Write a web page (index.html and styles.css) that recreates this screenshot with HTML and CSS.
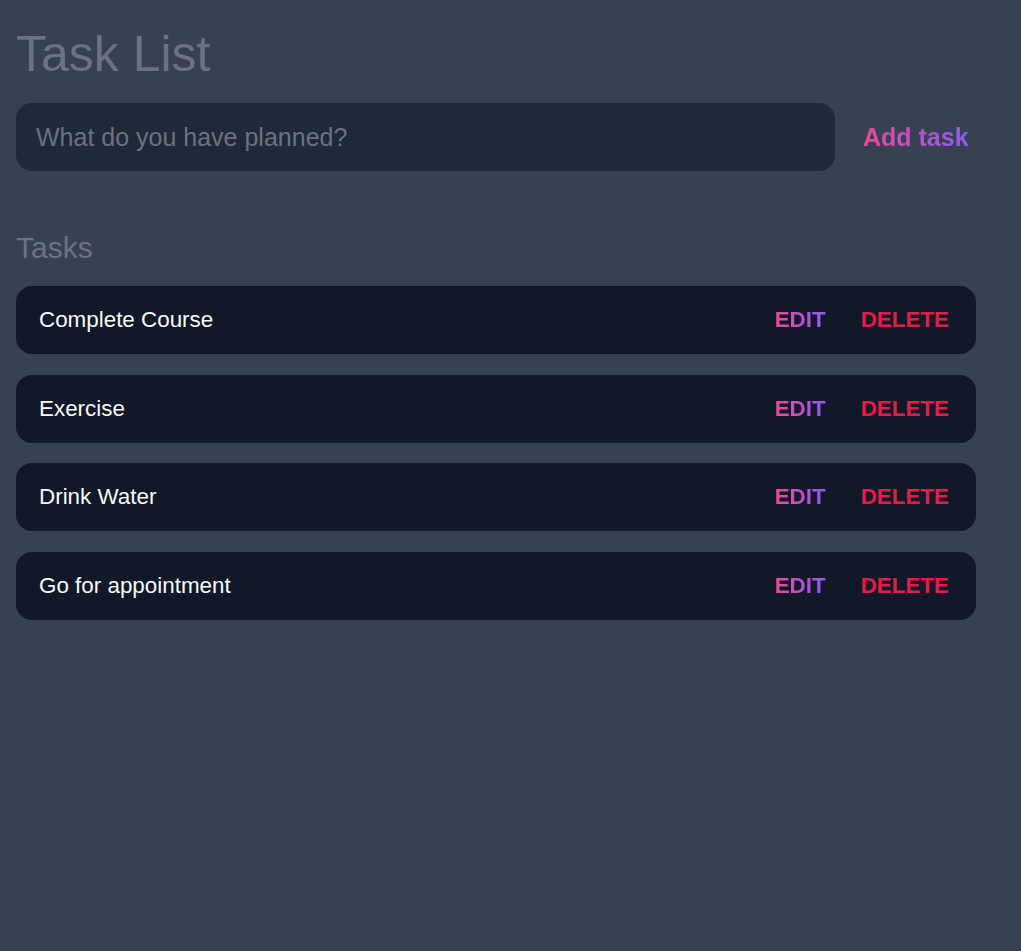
FILE: index.html
```html
<!DOCTYPE html>
<html>
<head>
<meta charset="utf-8">
<link rel="stylesheet" href="styles.css">
</head>
<body>
<main class="app">
  <h1 class="title">Task List</h1>
  <form class="new-task" onsubmit="return false">
    <input class="new-task-input" type="text" placeholder="What do you have planned?">
    <button class="add-btn" type="submit"><span class="grad">Add task</span></button>
  </form>
  <section class="tasks">
    <h2 class="tasks-heading">Tasks</h2>
    <div class="task-list">
      <div class="task"><span class="task-text">Complete Course</span><div class="actions"><button class="edit"><span class="grad">EDIT</span></button><button class="delete">DELETE</button></div></div>
      <div class="task"><span class="task-text">Exercise</span><div class="actions"><button class="edit"><span class="grad">EDIT</span></button><button class="delete">DELETE</button></div></div>
      <div class="task"><span class="task-text">Drink Water</span><div class="actions"><button class="edit"><span class="grad">EDIT</span></button><button class="delete">DELETE</button></div></div>
      <div class="task"><span class="task-text">Go for appointment</span><div class="actions"><button class="edit"><span class="grad">EDIT</span></button><button class="delete">DELETE</button></div></div>
    </div>
  </section>
</main>
</body>
</html>
```
FILE: styles.css
```css
* { box-sizing: border-box; }
html, body { margin: 0; padding: 0; }
body {
  background: #374151;
  font-family: "Liberation Sans", Arial, sans-serif;
  min-height: 951px;
}
.app {
  padding: 26px 16px 16px;
  width: 992px;
}
.title {
  margin: 0;
  font-size: 50px;
  font-weight: 400;
  line-height: 56px;
  color: #6b7280;
}
.new-task {
  display: flex;
  align-items: center;
  margin-top: 21px;
}
.new-task-input {
  width: 819px;
  height: 68px;
  border: none;
  outline: none;
  border-radius: 16px;
  background: #1f2937;
  padding: 0 20px;
  font-family: inherit;
  font-size: 25px;
  color: #f9fafb;
}
.new-task-input::placeholder { color: #6b7280; }
.add-btn {
  background: none;
  border: none;
  padding: 0;
  margin-left: 28px;
  font-family: inherit;
  font-size: 25px;
  font-weight: 700;
  cursor: pointer;
}
.grad {
  background: linear-gradient(to right, #ec4899, #8b5cf6);
  -webkit-background-clip: text;
  background-clip: text;
  color: transparent;
}
.tasks { margin-top: 60px; }
.tasks-heading {
  margin: 0;
  font-size: 30px;
  font-weight: 400;
  line-height: 34px;
  color: #6b7280;
}
.task-list {
  display: flex;
  flex-direction: column;
  gap: 20.67px;
  margin-top: 21px;
  width: 960px;
}
.task {
  display: flex;
  align-items: center;
  justify-content: space-between;
  height: 68px;
  padding: 0 27px 0 23px;
  background: #111827;
  border-radius: 16px;
}
.task-text {
  font-size: 22.4px;
  color: #f9fafb;
}
.actions {
  display: flex;
  gap: 35px;
}
.actions button {
  background: none;
  border: none;
  padding: 0;
  font-family: inherit;
  font-size: 22.4px;
  font-weight: 700;
  cursor: pointer;
}
.delete { color: #e11d48; }
```
